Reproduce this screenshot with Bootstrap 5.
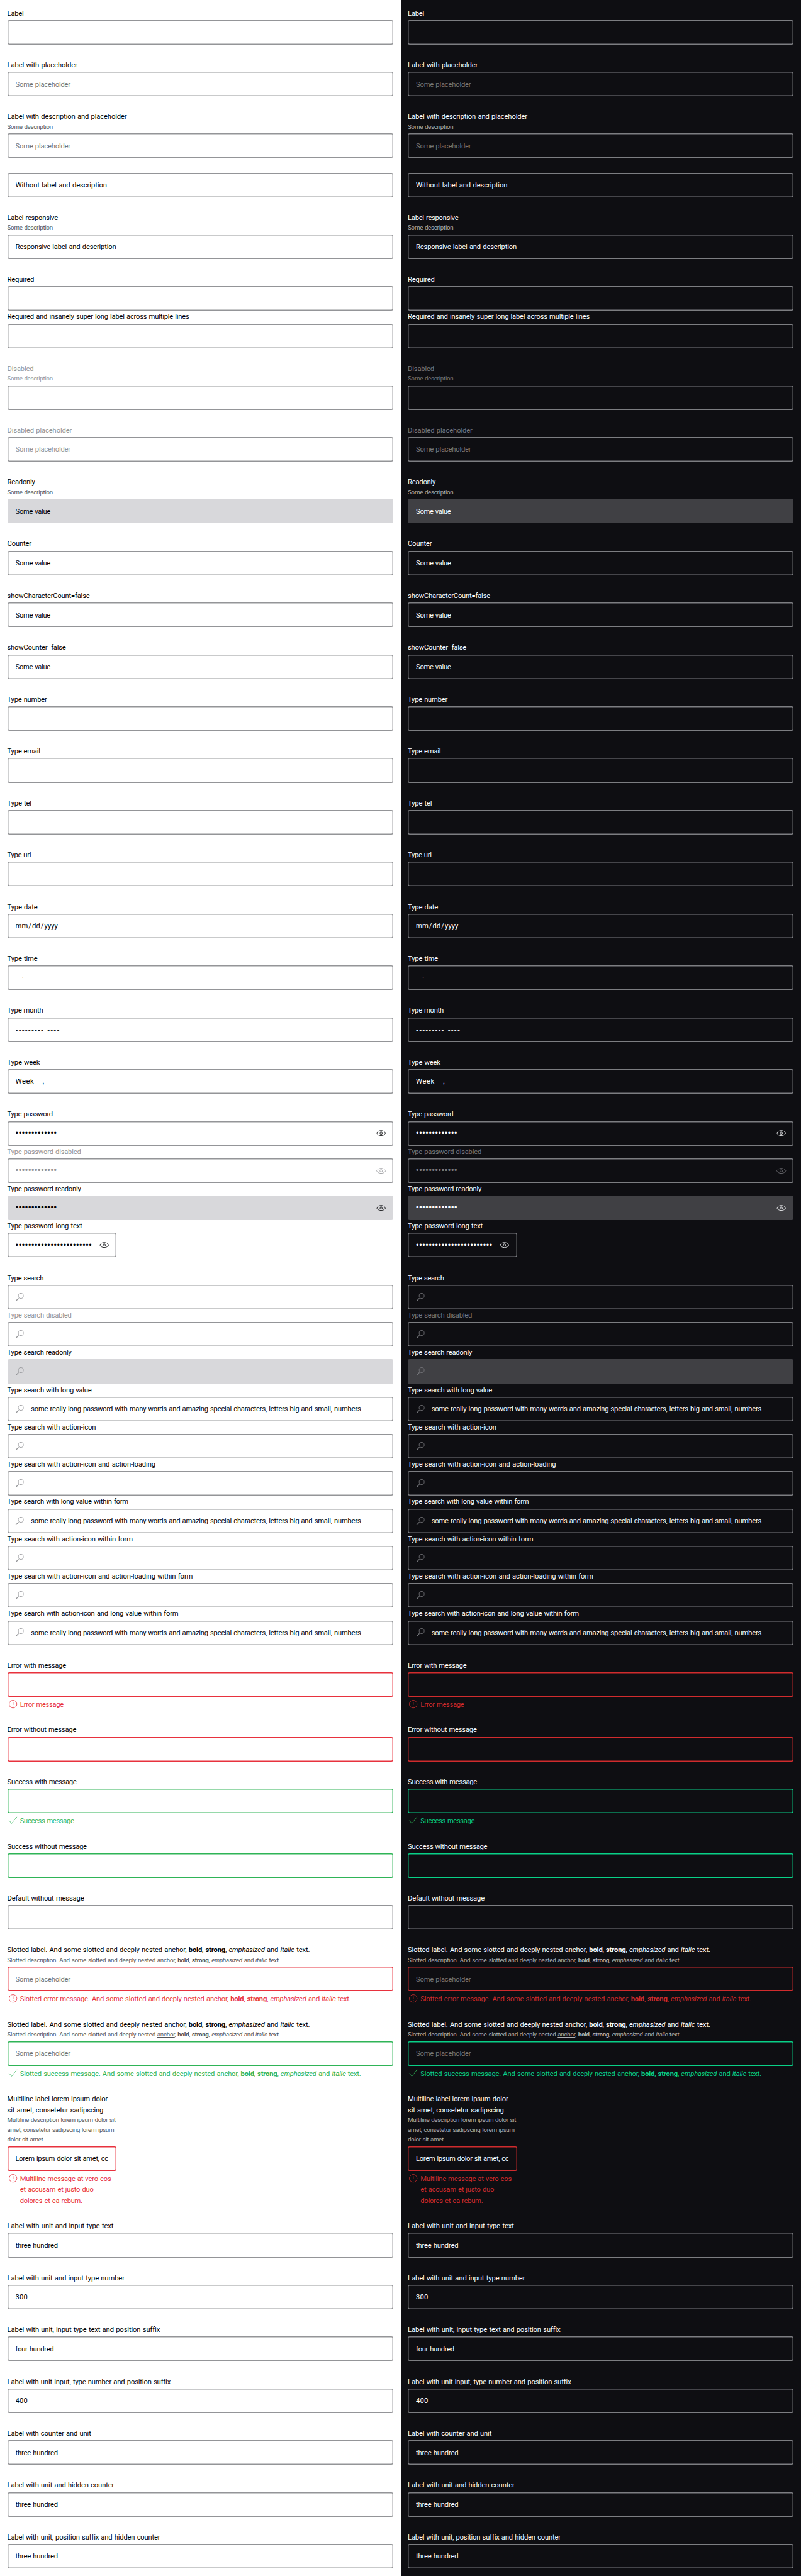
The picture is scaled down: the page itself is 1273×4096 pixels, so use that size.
<!DOCTYPE html>
<html lang="en">
<head>
<meta charset="utf-8">
<meta name="viewport" content="width=device-width, initial-scale=1">
<title>Text field overview</title>
<link href="https://cdn.jsdelivr.net/npm/bootstrap@5.3.0/dist/css/bootstrap.min.css" rel="stylesheet">
<style>
:root{--u:.7233px}
body{font-family:Roboto,"Liberation Sans",sans-serif;font-size:calc(15.5*var(--u));line-height:calc(24*var(--u));word-spacing:.06em;background:#fff}
.theme-pane{--ink:#010205;--muted:#535457;--dim:#949598;--edge:#949598;--ro:#d8d8db;--hint:#757575;--err:#e8323e;--ok:#2fb457;--okicon:#2fb457;--bg:#fff;
 width:50%;height:4096px;overflow:hidden;padding:calc(16*var(--u));background:var(--bg);color:var(--ink);gap:calc(32*var(--u))}
.theme-pane.is-dark{--ink:#fbfcff;--muted:#afb0b3;--dim:#76777b;--edge:#7c7d81;--ro:#404044;--hint:#757575;--err:#d02b2d;--ok:#09d087;--okicon:#2fb457;--bg:#0e0e12}
.field-label{display:block;padding-top:1px;margin-bottom:-1px}
.field-desc{display:block;font-size:calc(13.5*var(--u));line-height:calc(21.75*var(--u));color:var(--muted)}
.field-text{margin-bottom:calc(4*var(--u))}
.form-control{height:calc(54*var(--u));padding:0 calc(18*var(--u));border:0;border-radius:calc(4*var(--u));box-shadow:inset 0 0 0 calc(2*var(--u)) var(--edge);background:transparent;color:var(--ink);font-size:inherit;line-height:inherit;display:flex;align-items:center}
.field-value{flex:1 1 0;min-width:0;overflow:hidden;white-space:nowrap;padding-top:1px}
.hint .field-value{color:var(--hint)}
.off,.off .field-desc,.off .form-control,.off .hint .field-value{color:var(--dim)}
.ro .form-control{background:var(--ro);box-shadow:none}
.is-error{--edge:var(--err)}.is-success{--edge:var(--ok)}
.field-msg{display:flex;gap:calc(4*var(--u));margin-top:calc(4*var(--u));color:var(--edge)}
.msg-text{padding-top:1px;margin-bottom:-1px}
.is-success .field-msg svg{color:var(--okicon)}
.narrow{width:calc(240*var(--u))}
svg{width:calc(24*var(--u));height:calc(24*var(--u));flex:none;fill:none;stroke:currentColor;stroke-width:1.150}
.glass{color:var(--dim);margin-left:calc(-2*var(--u));margin-right:calc(12*var(--u))}
.eye{margin-left:calc(13*var(--u));margin-right:calc(-3*var(--u))}
.glyph-run{font-family:"Liberation Sans",sans-serif;font-size:calc(16*var(--u))}
.dot-run{font-size:calc(17.5*var(--u))}
.slash{margin:0 calc(1.5*var(--u))}
.fit{white-space:nowrap}
</style>
</head>
<body>
<svg class="d-none" aria-hidden="true">
<symbol id="i-eye" viewBox="0 0 24 24"><path d="M2 12C4.500 8 8 6.500 12 6.500s7.500 1.500 10 5.500c-2.500 4-6 5.500-10 5.500S4.500 16 2 12z"/><circle cx="12" cy="12" r="2.700"/></symbol>
<symbol id="i-search" viewBox="0 0 24 24"><circle cx="14" cy="9" r="5.600"/><path d="M9 14.200L3 20.300" stroke-width="1.800"/></symbol>
<symbol id="i-error" viewBox="0 0 24 24"><circle cx="12" cy="12" r="8.500"/><path d="M12 7.200v6.300M12 15.300v1.800" stroke-width="1.700"/></symbol>
<symbol id="i-check" viewBox="0 0 24 24"><path d="M3.500 12l5.500 6.500L20.500 4"/></symbol>
</svg>
<main class="d-flex" id="stage"></main>
<script>
const icon = n => `<svg${n === 'eye' ? ' class="eye"' : n === 'search' ? ' class="glass"' : ''}><use href="#i-${n}"/></svg>`;
// Text set to a given measure (in design pixels) by tracking; lines are separated by <br>.
const fit = (t, w) => t.split('<br>').map((s, i) => `<span class="fit" data-w="${[].concat(w)[i]}">${s}</span>`).join('<br>');
const field = ({l, d, v, c = '', hint, pre = '', post = '', m}) =>
  `<div class="${c}">${l ? `<div class="field-text"><span class="field-label">${fit(...l)}</span>${d ? `<span class="field-desc">${fit(...d)}</span>` : ''}</div>` : ''}` +
  `<div class="form-control${hint ? ' hint' : ''}">${pre}<span class="field-value">${v ? fit(...v) : ''}</span>${post}</div>` +
  (m ? `<div class="field-msg">${icon(c.includes('error') ? 'error' : 'check')}<span class="msg-text">${fit(...m)}</span></div>` : '') + `</div>`;
const D = ['Some description', 100], P = ['Some placeholder', 120.700], V = ['Some value', 76.500];
const run = (s, k = '') => `<span class="glyph-run ${k}">${s}</span>`, slash = '<span class="slash">/</span>';
const dots = n => [run('•'.repeat(n), 'dot-run'), n * 7.020], eye = icon('eye'), glass = icon('search');
const long = ['some really long password with many words and amazing special characters, letters big and small, numbers', 725];
const rich = (s, w) => [`${s}. And some slotted and deeply nested <u>anchor</u>, <b>bold</b>, <strong>strong</strong>, <em>emphasized</em> and <i>italic</i> text.`, w];
const search = (t, w, v, c) => ({l: ['Type search' + t, w], v, c, pre: glass});
const three = ['three hundred', 93];
const groups = [
 [{l:['Label',36]}], [{l:['Label with placeholder',153.700], v:P, hint:1}], [{l:['Label with description and placeholder',262.600], d:D, v:P, hint:1}],
 [{v:['Without label and description',201]}], [{l:['Label responsive',111], d:D, v:['Responsive label and description',221]}],
 [{l:['Required',59]}, {l:['Required and insanely super long label across multiple lines',399.500]}],
 [{l:['Disabled',58], d:D, c:'off'}], [{l:['Disabled placeholder',142], v:P, hint:1, c:'off'}], [{l:['Readonly',61], d:D, v:V, c:'ro'}],
 [{l:['Counter',53], v:V}], [{l:['showCharacterCount=false',181], v:V}], [{l:['showCounter=false',128.500], v:V}],
 [{l:['Type number',87]}], [{l:['Type email',72]}], [{l:['Type tel',53]}], [{l:['Type url',52]}],
 [{l:['Type date',66.300], v:['mm' + slash + 'dd' + slash + 'yyyy',93]}], [{l:['Type time',66.300], v:[run('--:-- --'),54]}],
 [{l:['Type month',78.600], v:[run('--------- ----'),98]}], [{l:['Type week',71.300], v:['Week ' + run('--, ----'),95]}],
 [{l:['Type password',100], v:dots(13), post:eye}, {l:['Type password disabled',161.700], v:dots(13), post:eye, c:'off'},
  {l:['Type password readonly',161.700], v:dots(13), post:eye, c:'ro'}, {l:['Type password long text',164.500], v:dots(24), post:eye, c:'narrow'}],
 [search('',79.700), search(' disabled',141,null,'off'), search(' readonly',141,null,'ro'), search(' with long value',185,long), search(' with action-icon',194.700),
  search(' with action-icon and action-loading',325.500), search(' with long value within form',266,long), search(' with action-icon within form',275.500),
  search(' with action-icon and action-loading within form',407.500), search(' with action-icon and long value within form',376,long)],
 [{l:['Error with message',129], c:'is-error', m:['Error message',95.500]}], [{l:['Error without message',151.500], c:'is-error'}],
 [{l:['Success with message',152], c:'is-success', m:['Success message',118.500]}], [{l:['Success without message',174.500], c:'is-success'}],
 [{l:['Default without message',168.500]}],
 [{l:rich('Slotted label',664.500), d:rich('Slotted description',599.500), v:P, hint:1, c:'is-error', m:rich('Slotted error message',727)}],
 [{l:rich('Slotted label',664.500), d:rich('Slotted description',599.500), v:P, hint:1, c:'is-success', m:rich('Slotted success message',749)}],
 [{l:['Multiline label lorem ipsum dolor<br>sit amet, consetetur sadipscing',[220.500,211]], d:['Multiline description lorem ipsum dolor sit<br>amet, consetetur sadipscing lorem ipsum<br>dolor sit amet',[238,234.500,78.500]],
   v:['Lorem ipsum dolor sit amet, cc',203.500], c:'is-error narrow', m:['Multiline message at vero eos<br>et accusam et justo duo<br>dolores et ea rebum.',[200,161.500,137]]}],
 [{l:['Label with unit and input type text',233.500], v:three}], [{l:['Label with unit and input type number',257.500], v:['300',27]}],
 [{l:['Label with unit, input type text and position suffix',334], v:['four hundred',84]}], [{l:['Label with unit input, type number and position suffix',357.500], v:['400',27]}],
 [{l:['Label with counter and unit',184], v:three}], [{l:['Label with unit and hidden counter',234.500], v:three}],
 [{l:['Label with unit, position suffix and hidden counter',334.500], v:three}]
];
const body = groups.map(g => `<section>${g.map(field).join('')}</section>`).join('');
document.getElementById('stage').innerHTML =
  `<div class="theme-pane d-flex flex-column">${body}</div><div class="theme-pane is-dark d-flex flex-column">${body}</div>`;
document.querySelectorAll('.fit').forEach(e => {
  e.style.letterSpacing = (e.dataset.w * .7233 - e.getBoundingClientRect().width) / e.textContent.length + 'px';
});
</script>
<script src="https://cdn.jsdelivr.net/npm/bootstrap@5.3.0/dist/js/bootstrap.bundle.min.js"></script>
</body>
</html>
